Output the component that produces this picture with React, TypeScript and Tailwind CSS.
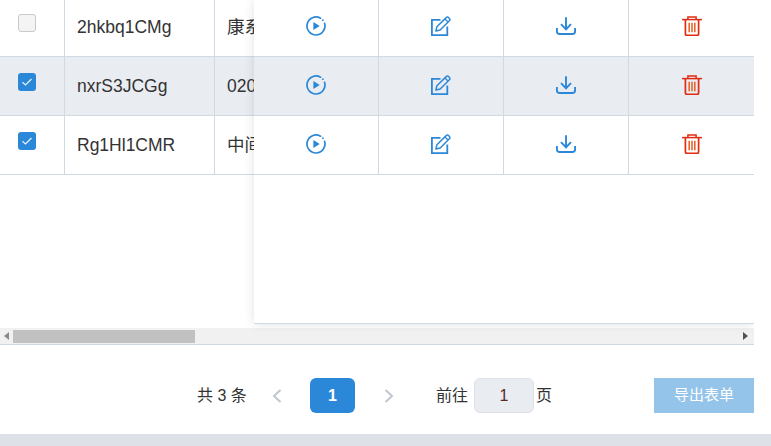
import React from "react";

const font = { fontFamily: '"Liberation Sans","Noto Sans CJK SC",sans-serif' };

const rows = [
  { id: "2hkbq1CMg", name: "康系", checked: false, striped: false },
  { id: "nxrS3JCGg", name: "0205", checked: true, striped: true },
  { id: "Rg1Hl1CMR", name: "中间", checked: true, striped: false },
];

function Play() {
  return (
    <svg width="20" height="20" viewBox="0 0 20 20" fill="none">
      <path d="M14.5 2.2A9 9 0 1 0 18.6 7.4" stroke="#2b88d8" strokeWidth="1.7" strokeLinecap="round" />
      <circle cx="16.9" cy="4.2" r="0.9" fill="#2b88d8" />
      <path d="M7.4 6v8l6.3-4z" fill="#2b88d8" />
    </svg>
  );
}
function Edit() {
  return (
    <svg width="20" height="20" viewBox="0 0 20 20" fill="none">
      <path d="M9.5 3.9H.9v15.3h15.4V10.4" stroke="#2b88d8" strokeWidth="1.8" />
      <path d="M4.9 15l1-4.3L15.2 1.6a1.6 1.6 0 0 1 2.3 0l.9.9a1.6 1.6 0 0 1 0 2.3L9.2 14z" stroke="#2b88d8" strokeWidth="1.5" strokeLinejoin="round" />
      <path d="M14 3l3 3" stroke="#2b88d8" strokeWidth="1.2" />
    </svg>
  );
}
function Download() {
  return (
    <svg width="20" height="20" viewBox="0 0 20 20" fill="none">
      <path d="M10 1.2v12.2M5 8.2l5 5.2 5-5.2" stroke="#2b88d8" strokeWidth="1.9" />
      <path d="M.9 12v3.2c0 1.7 1.1 2.8 2.8 2.8h12.6c1.7 0 2.8-1.1 2.8-2.8V12" stroke="#2b88d8" strokeWidth="1.9" />
    </svg>
  );
}
function Trash() {
  return (
    <svg width="20" height="20" viewBox="0 0 20 20" fill="none">
      <path d="M0 3.6h20" stroke="#e02c12" strokeWidth="1.5" />
      <path d="M5.9 3.6V.9h8.2v2.7" stroke="#e02c12" strokeWidth="1.5" />
      <path d="M3.4 3.6v14.2c0 1 .7 1.6 1.6 1.6h10c1 0 1.6-.6 1.6-1.6V3.6" stroke="#e02c12" strokeWidth="1.7" />
      <path d="M7.2 6.8v9.4M10 6.8v9.4M12.8 6.8v9.4" stroke="#e8662c" strokeWidth="1.6" />
    </svg>
  );
}

function Checkbox({ checked }: { checked: boolean }) {
  return checked ? (
    <div className="w-[18px] h-[18px] rounded-[3px] bg-[#2b88d8] flex items-center justify-center">
      <svg width="12" height="10" viewBox="0 0 12 10" fill="none">
        <path d="M1.5 5.2l3 2.8 6-6" stroke="#e8f2fb" strokeWidth="1.2" />
      </svg>
    </div>
  ) : (
    <div className="w-[18px] h-[18px] rounded-[3px] bg-[#f4f4f5] border border-[#c9c9c9]" />
  );
}

function Chevron({ dir }: { dir: "left" | "right" }) {
  return (
    <svg width="10" height="14" viewBox="0 0 10 14" fill="none">
      <path d={dir === "left" ? "M8.5 1L2 7l6.5 6" : "M1.5 1L8 7l-6.5 6"} stroke="#c0c6d0" strokeWidth="2" />
    </svg>
  );
}

export default function App() {
  return (
    <div className="w-[771px] h-[446px] bg-white overflow-hidden flex flex-col text-[#333] text-base" style={font}>
      <div className="w-[754px] h-[345px] flex flex-col relative overflow-hidden">
        <div className="h-[328px] overflow-hidden">
          <div className="-mt-[2px] flex flex-col">
            {rows.map((r) => (
              <div key={r.id} className={`flex h-[59px] border-b border-[#d0dae5] ${r.striped ? "bg-[#e9ecf1]" : "bg-white"}`}>
                <div className="w-[65px] border-r border-[#d0dae5] pt-[16px] pl-[18px]">
                  <Checkbox checked={r.checked} />
                </div>
                <div className="w-[150px] border-r border-[#d0dae5] pl-[12px] flex items-center text-[17.5px]">{r.id}</div>
                <div className="flex-1 pl-[12px] flex items-center text-[17.5px]">{r.name}</div>
              </div>
            ))}
          </div>
        </div>

        <div className="h-[17px] bg-[#f1f1f1] border-b border-[#d0dae5] flex items-center">
          <div className="w-[13px] flex justify-center">
            <div className="w-0 h-0 border-y-[4px] border-y-transparent border-r-[5px] border-r-[#8a8a8a]" />
          </div>
          <div className="w-[182px] h-[13px] bg-[#c1c1c1]" />
          <div className="flex-1" />
          <div className="w-[17px] flex justify-center">
            <div className="w-0 h-0 border-y-[4px] border-y-transparent border-l-[5px] border-l-[#505050]" />
          </div>
        </div>

        <div className="absolute left-[254px] top-0 w-[500px] h-[324px] bg-white border-b border-[#d0dae5] shadow-[0_0_10px_rgba(0,0,0,0.12)]">
          <div className="-mt-[2px] flex flex-col">
            {rows.map((r) => (
              <div key={r.id} className={`flex h-[59px] border-b border-[#d0dae5] ${r.striped ? "bg-[#e9ecf1]" : "bg-white"}`}>
                {[<Play />, <Edit />, <Download />, <Trash />].map((icon, i) => (
                  <div key={i} className={`w-[125px] pb-[3px] flex items-center justify-center ${i < 3 ? "border-r border-[#d0dae5]" : ""}`}>
                    {icon}
                  </div>
                ))}
              </div>
            ))}
          </div>
        </div>
      </div>

      <div className="w-[754px] h-[89px] pt-[33px] pl-[197px] flex items-start">
        <div className="h-[35px] flex items-center w-[50px] whitespace-nowrap">共 3 条</div>
        <div className="w-[63px] h-[35px] flex items-center pl-[25px]">
          <Chevron dir="left" />
        </div>
        <div className="w-[45px] h-[35px] rounded-[6px] bg-[#2b88d8] text-white font-bold flex items-center justify-center">1</div>
        <div className="w-[81px] h-[35px] flex items-center pl-[29px]">
          <Chevron dir="right" />
        </div>
        <div className="h-[35px] flex items-center w-[38px]">前往</div>
        <div className="w-[60px] h-[35px] rounded-[6px] bg-[#e9ecf1] border border-[#dde2e9] flex items-center justify-center text-[#5a2a22]">1</div>
        <div className="h-[35px] flex items-center pl-[2px]">页</div>
        <div className="flex-1" />
        <div className="w-[100px] h-[35px] bg-[#95c4ea] text-white text-[15px] flex items-center justify-center">导出表单</div>
      </div>

      <div className="h-[12px] bg-[#dfe1e9]" />
    </div>
  );
}
